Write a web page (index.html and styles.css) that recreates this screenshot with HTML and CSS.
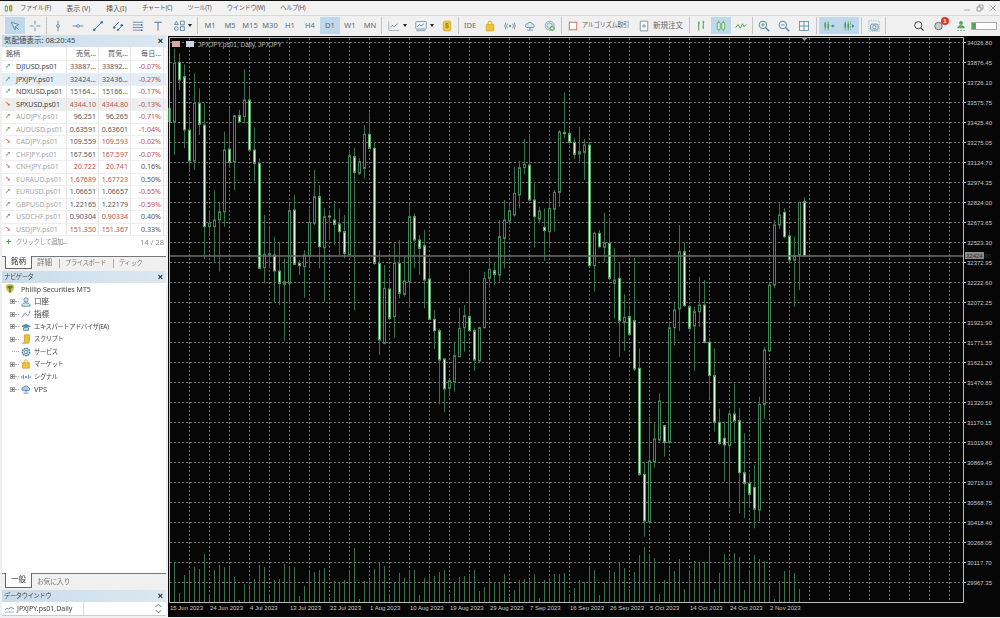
FILE: index.html
```html
<!DOCTYPE html>
<html lang="ja">
<head>
<meta charset="utf-8">
<title>MetaTrader 5</title>
<link rel="stylesheet" href="styles.css">
</head>
<body>
<div class="app">
  <header class="menubar">
    <svg class="logo" viewBox="0 0 12 12"><path d="M3 1v10M9 1v10" stroke="#4f9a54"/><rect x="1.5" y="3" width="3" height="6" fill="#e7f3e0" stroke="#4f9a54"/><rect x="7.500" y="2.500" width="3" height="6" fill="#e0b93c" stroke="#4f9a54"/></svg>
    <nav class="menus">
      <span class="k">ファイル (F)</span><span>表示 (V)</span><span>挿入(I)</span><span class="k">チャート(C)</span><span class="k">ツール(T)</span><span class="k">ウインドウ(W)</span><span class="k">ヘルプ(H)</span>
    </nav>
    <div class="winctl">
      <svg viewBox="0 0 8 8"><path d="M1 6h6" stroke="#aaa"/></svg>
      <svg viewBox="0 0 8 8"><path d="M1 3h4v4H1zM3 3V1h4v4H5" fill="none" stroke="#999"/></svg>
      <svg viewBox="0 0 8 8"><path d="M1.500 1.500l5 5M6.500 1.500l-5 5" stroke="#999"/></svg>
    </div>
  </header>

  <div class="toolbar">
    <button class="tb on"><svg class="ic" viewBox="0 0 16 16"><path d="M3 3l10 3-4 2-1 5z" fill="#d8e8f2" stroke="#3f7396"/><path d="M9 9l4 4" stroke="#3f7396"/></svg></button>
    <button class="tb"><svg class="ic" viewBox="0 0 16 16"><path d="M8 1v5M8 10v5M1 8h5M10 8h5" stroke="#3f7396"/></svg></button>
    <i class="sep"></i>
    <button class="tb"><svg class="ic" viewBox="0 0 16 16"><path d="M8 1v14" stroke="#3f7396"/><circle cx="8" cy="8" r="1.800" fill="#fff" stroke="#3f7396"/></svg></button>
    <button class="tb"><svg class="ic" viewBox="0 0 16 16"><path d="M1 8h14" stroke="#3f7396"/><circle cx="8" cy="8" r="1.800" fill="#fff" stroke="#3f7396"/></svg></button>
    <button class="tb"><svg class="ic" viewBox="0 0 16 16"><path d="M3 13L13 3" stroke="#3f7396" stroke-width="1.200"/><circle cx="3" cy="13" r="1.700" fill="#3f7396"/><circle cx="13" cy="3" r="1.700" fill="#3f7396"/></svg></button>
    <button class="tb"><svg class="ic" viewBox="0 0 16 16"><path d="M2 10L9 3M7 14l7-7" stroke="#3f7396" stroke-width="1.300"/><circle cx="3" cy="10" r="1.600" fill="#3f7396"/><circle cx="13" cy="7" r="1.600" fill="#3f7396"/><circle cx="8" cy="13" r="1.400" fill="#3f7396"/></svg></button>
    <button class="tb"><svg class="ic" viewBox="0 0 16 16"><path d="M1 3h14M1 6.500h11M1 10h14M1 13.500h11" stroke="#3f7396"/><circle cx="13" cy="6.500" r="1.200" fill="#3f7396"/><circle cx="13" cy="13.500" r="1.200" fill="#3f7396"/></svg></button>
    <button class="tb"><svg class="ic" viewBox="0 0 16 16"><path d="M3 3h10M8 3v11" stroke="#3f7396" stroke-width="1.200"/></svg></button>
    <button class="tb wide"><svg class="ic" viewBox="0 0 16 16"><circle cx="4.500" cy="11.500" r="2.500" fill="none" stroke="#3f7396"/><rect x="10" y="9" width="5" height="5" fill="none" stroke="#3f7396"/><path d="M4.500 1.500L7 6H2zM10 1.500h5v5h-5z" fill="none" stroke="#3f7396"/></svg><b class="caret"></b></button>
    <i class="sep m"></i>
    <button class="tb txt">M1</button><button class="tb txt">M5</button><button class="tb txt">M15</button><button class="tb txt">M30</button><button class="tb txt">H1</button><button class="tb txt">H4</button><button class="tb txt on">D1</button><button class="tb txt">W1</button><button class="tb txt">MN</button>
    <i class="sep"></i>
    <button class="tb wide"><svg class="ic" viewBox="0 0 16 16"><path d="M1 2v12h14" stroke="#9aa" fill="none"/><path d="M3 10l3-3 2 2 5-4" stroke="#3f7396" fill="none"/></svg><b class="caret"></b></button>
    <button class="tb wide"><svg class="ic" viewBox="0 0 16 16"><rect x="1" y="2" width="14" height="10" rx="1" fill="#eef3f6" stroke="#6b8799"/><path d="M3 9l3-3 2 2 4-3" stroke="#3f7396" fill="none"/><path d="M2 14h12" stroke="#8fb3c9" stroke-width="2"/></svg><b class="caret"></b></button>
    <button class="tb"><svg class="ic" viewBox="0 0 16 16"><rect x="3" y="1.500" width="10" height="13" rx="2" fill="#f0c63c" stroke="#d6a32a"/><text x="8" y="11" class="coin">$</text></svg></button>
    <i class="sep"></i>
    <button class="tb txt">IDE</button>
    <button class="tb"><svg class="ic" viewBox="0 0 16 16"><path d="M3 6h10v8.500H3z" fill="#f2c232" stroke="#d9a520"/><path d="M5.500 6V4a2.500 2.500 0 015 0v2" fill="none" stroke="#d9a520" stroke-width="1.300"/></svg></button>
    <button class="tb"><svg class="ic" viewBox="0 0 16 16"><circle cx="8" cy="8" r="1.500" fill="#5b7f97"/><path d="M4.500 5a5 5 0 000 6M11.500 5a5 5 0 010 6M2.500 3.500a8 8 0 000 9M13.500 3.500a8 8 0 010 9" fill="none" stroke="#5b7f97"/></svg></button>
    <button class="tb"><svg class="ic" viewBox="0 0 16 16"><path d="M4 10a2.500 2.500 0 01.500-5 4 4 0 017 .5A2.300 2.300 0 0112 10z" fill="#d5e6f1" stroke="#4f7f9f"/><path d="M8 10v3M4 13.500h8" stroke="#4f7f9f"/></svg></button>
    <button class="tb"><svg class="ic" viewBox="0 0 16 16"><circle cx="7.500" cy="7.500" r="6" fill="#dbe6ea" stroke="#7d9aa8"/><circle cx="7.500" cy="7.500" r="3.500" fill="none" stroke="#7d9aa8"/><circle cx="11" cy="11" r="3.500" fill="#69b56d"/><path d="M11 9v4M9 11h4" stroke="#fff"/></svg></button>
    <i class="sep"></i>
    <button class="tb label"><svg class="ic" viewBox="0 0 16 16"><rect x="3" y="3" width="10" height="10" fill="#fff" stroke="#c9736a" stroke-width="1.300"/></svg><span class="k">アルゴリズム取引</span></button>
    <button class="tb label order"><svg class="ic" viewBox="0 0 16 16"><path d="M3 1.500h10v13H3z" fill="#fff" stroke="#5a7d92"/><path d="M8 5v6M5 8h6" stroke="#5a7d92"/></svg><span>新規注文</span></button>
    <i class="sep"></i>
    <button class="tb"><svg class="ic" viewBox="0 0 16 16"><path d="M5 2v12M4 8h1M5 4h1.500M11 1v11M10 9h1M11 3h1.500" stroke="#46a04d" stroke-width="1.300" fill="none"/></svg></button>
    <button class="tb on"><svg class="ic" viewBox="0 0 16 16"><path d="M5 1v14M11 1v14" stroke="#46a04d"/><rect x="3" y="3.500" width="4" height="9" rx="1" fill="#dff0dc" stroke="#46a04d"/><rect x="9" y="3.500" width="4" height="9" rx="1" fill="#dff0dc" stroke="#46a04d"/></svg></button>
    <button class="tb"><svg class="ic" viewBox="0 0 16 16"><path d="M1 10l3-4 3 5 3-6 2 4 3-3" fill="none" stroke="#46a04d" stroke-width="1.300"/></svg></button>
    <i class="sep"></i>
    <button class="tb"><svg class="ic" viewBox="0 0 16 16"><circle cx="6.500" cy="6.500" r="5" fill="#eef4f8" stroke="#4f7f9f" stroke-width="1.200"/><path d="M10 10l5 5" stroke="#4f7f9f" stroke-width="1.600"/><path d="M6.500 4v5M4 6.500h5" stroke="#4f9a54"/></svg></button>
    <button class="tb"><svg class="ic" viewBox="0 0 16 16"><circle cx="6.500" cy="6.500" r="5" fill="#eef4f8" stroke="#4f7f9f" stroke-width="1.200"/><path d="M10 10l5 5" stroke="#4f7f9f" stroke-width="1.600"/><path d="M4 6.500h5" stroke="#4f7f9f"/></svg></button>
    <button class="tb"><svg class="ic" viewBox="0 0 16 16"><rect x="2" y="2" width="12" height="12" fill="#eef4f8" stroke="#4f7f9f"/><path d="M8 2v12M2 8h12" stroke="#4f7f9f"/></svg></button>
    <i class="sep m"></i>
    <button class="tb on"><svg class="ic" viewBox="0 0 16 16"><path d="M3 2v12M7 2v12" stroke="#46a04d"/><rect x="2" y="4" width="2" height="6" fill="#46a04d"/><rect x="6" y="5" width="2" height="6" fill="#46a04d"/><path d="M10 8h5" stroke="#3f7396"/><path d="M15 8l-2.500-2v4z" fill="#3f7396"/></svg></button>
    <button class="tb on"><svg class="ic" viewBox="0 0 16 16"><path d="M3 2v12M7 2v12" stroke="#46a04d"/><rect x="2" y="4" width="2" height="6" fill="#46a04d"/><rect x="6" y="5" width="2" height="6" fill="#46a04d"/><path d="M10 2v12" stroke="#3f7396" stroke-dasharray="1 1"/><path d="M15 8l-3-2.500v5z" fill="#3f7396"/></svg></button>
    <i class="sep m"></i>
    <button class="tb"><svg class="ic" viewBox="0 0 16 16"><path d="M1 1h14v14H1z" fill="none" stroke="#8aa" stroke-dasharray="1.500 1.500"/><rect x="3.500" y="5.500" width="10" height="8" rx="1.500" fill="#dbe6ee" stroke="#4f7f9f"/><circle cx="8.500" cy="9.500" r="2.200" fill="#fff" stroke="#4f7f9f"/></svg></button>
    <i class="sep"></i>
    <div class="status">
      <svg class="ic" viewBox="0 0 16 16"><circle cx="7" cy="7" r="4.800" fill="none" stroke="#444" stroke-width="1.300"/><path d="M10.500 10.500l3.500 3.500" stroke="#444" stroke-width="1.500"/></svg>
      <span class="bell"><svg class="ic" viewBox="0 0 16 16"><circle cx="6" cy="8" r="5" fill="#ccc" stroke="#666" stroke-width="1.200"/></svg><b class="badge">1</b></span>
      <svg class="ic" viewBox="0 0 16 16"><circle cx="8" cy="4" r="2.600" fill="#5aa65e"/><path d="M3 11c0-3 2-4 5-4s5 1 5 4z" fill="#5aa65e"/><path d="M3 14h2M7 14h2M11 14h2" stroke="#5aa65e" stroke-width="1.400"/></svg>
      <span class="meter"><i class="fill"></i></span>
    </div>
  </div>

  <main class="workspace">
    <aside class="side">
      <section class="watch">
        <h2 class="title"><span>気配値表示: 08:20:45</span><b class="close">×</b></h2>
        <div class="row head"><span>銘柄</span><span class="c">売気...</span><span class="c">買気...</span><span class="c">毎日...</span></div>
        <div class="row"><span class="sym"><b class="up">➚</b>DJIUSD.ps01</span><span>33887...</span><span>33892...</span><span class="red">-0.07%</span></div>
        <div class="row sel"><span class="sym"><b class="up">➚</b>JPXJPY.ps01</span><span>32424...</span><span>32436...</span><span class="red">-0.27%</span></div>
        <div class="row"><span class="sym"><b class="up">➚</b>NDXUSD.ps01</span><span>15164...</span><span>15166...</span><span class="red">-0.17%</span></div>
        <div class="row grey"><span class="sym"><b class="down">➘</b>SPXUSD.ps01</span><span class="red">4344.10</span><span class="red">4344.80</span><span class="red">-0.13%</span></div>
        <div class="row dim"><span class="sym"><b class="up">➚</b>AUDJPY.ps01</span><span>96.251</span><span>96.265</span><span class="red">-0.71%</span></div>
        <div class="row dim"><span class="sym"><b class="up">➚</b>AUDUSD.ps01</span><span>0.63591</span><span>0.63601</span><span class="red">-1.04%</span></div>
        <div class="row dim"><span class="sym"><b class="down">➘</b>CADJPY.ps01</span><span>109.559</span><span class="red">109.593</span><span class="red">-0.02%</span></div>
        <div class="row dim"><span class="sym"><b class="up">➚</b>CHFJPY.ps01</span><span>167.561</span><span class="red">167.597</span><span class="red">-0.07%</span></div>
        <div class="row dim"><span class="sym"><b class="down">➘</b>CNHJPY.ps01</span><span class="red">20.722</span><span class="red">20.741</span><span>0.16%</span></div>
        <div class="row dim"><span class="sym"><b class="down">➘</b>EURAUD.ps01</span><span class="red">1.67689</span><span class="red">1.67723</span><span>0.50%</span></div>
        <div class="row dim"><span class="sym"><b class="up">➚</b>EURUSD.ps01</span><span>1.06651</span><span>1.06657</span><span class="red">-0.55%</span></div>
        <div class="row dim"><span class="sym"><b class="up">➚</b>GBPUSD.ps01</span><span>1.22165</span><span>1.22179</span><span class="red">-0.59%</span></div>
        <div class="row dim"><span class="sym"><b class="up">➚</b>USDCHF.ps01</span><span class="blue">0.90304</span><span class="red">0.90334</span><span>0.40%</span></div>
        <div class="row dim"><span class="sym"><b class="down">➘</b>USDJPY.ps01</span><span class="red">151.350</span><span class="red">151.367</span><span>0.33%</span></div>
        <div class="add"><span class="addlabel"><b class="plus">+</b><span class="k">クリックして追加...</span></span><span>14 / 28</span></div>
        <div class="tabs"><span class="tab active">銘柄</span><span class="tab">詳細</span><span class="tab bar k">プライスボード</span><span class="tab bar k">ティック</span></div>
      </section>

      <section class="navigator">
        <h2 class="title"><span class="k">ナビゲータ</span><b class="close">×</b></h2>
        <ul class="tree">
          <li class="root"><svg class="ni" viewBox="0 0 12 12"><path d="M1 3a5 3 0 0110 0c0 4-3 8-5 8S1 7 1 3z" fill="#e6b93c"/><path d="M3 2h6v3H7v5H5V5H3z" fill="#2f8f5b"/></svg>Phillip Securities MT5</li>
          <li><i class="exp"></i><svg class="ni" viewBox="0 0 12 12"><circle cx="6" cy="3.500" r="2.500" fill="#dbe9f3" stroke="#4f7f9f"/><path d="M1 11c0-3 2-4 5-4s5 1 5 4z" fill="#dbe9f3" stroke="#4f7f9f"/></svg>口座</li>
          <li><i class="exp"></i><svg class="ni" viewBox="0 0 12 12"><path d="M1 10c2 0 2-5 4-5s1 3 3 3 2-5 3-6" fill="none" stroke="#6a7f8c"/></svg>指標</li>
          <li><i class="exp"></i><svg class="ni" viewBox="0 0 12 12"><path d="M0 5l6-3 6 3-6 3z" fill="#4f8fb5"/><path d="M3 7v3h6V7" fill="#bcd6e6" stroke="#4f7f9f"/></svg><span class="k">エキスパートアドバイザ(EA)</span></li>
          <li><i class="exp"></i><svg class="ni" viewBox="0 0 12 12"><path d="M4 1h6v8a2 2 0 01-2 2H2c1 0 2-1 2-2z" fill="#f0c040" stroke="#c99a20"/></svg><span class="k">スクリプト</span></li>
          <li><i class="exp none"></i><svg class="ni" viewBox="0 0 12 12"><circle cx="6" cy="6" r="4.500" fill="#bcd6e6" stroke="#4f7f9f" stroke-width="1.600" stroke-dasharray="2 1"/><circle cx="6" cy="6" r="1.800" fill="#fff" stroke="#4f7f9f"/></svg><span class="k">サービス</span></li>
          <li><i class="exp"></i><svg class="ni" viewBox="0 0 12 12"><path d="M2 4.500h8V11H2z" fill="#f2c232" stroke="#d9a520"/><path d="M4 4.500V3a2 2 0 014 0v1.500" fill="none" stroke="#d9a520"/></svg><span class="k">マーケット</span></li>
          <li><i class="exp"></i><svg class="ni" viewBox="0 0 12 12"><circle cx="6" cy="6" r="1.200" fill="#5b7f97"/><path d="M3 3.500v5M9 3.500v5M1 4.500v3M11 4.500v3" stroke="#5b7f97"/></svg><span class="k">シグナル</span></li>
          <li><i class="exp"></i><svg class="ni" viewBox="0 0 12 12"><path d="M3 8a2 2 0 010-4 3.500 3.500 0 016 .3A1.900 1.900 0 019 8z" fill="#a9cee6" stroke="#4f7f9f"/><path d="M6 8v2M3 11h6" stroke="#4f7f9f"/></svg>VPS</li>
        </ul>
        <div class="tabs"><span class="tab active">一般</span><span class="tab fav">お気に入り</span></div>
      </section>

      <section class="datawin">
        <h2 class="title"><span class="k">データウインドウ</span><b class="close">×</b></h2>
        <div class="datarow">
          <span class="dataname"><svg class="dl" viewBox="0 0 10 8"><path d="M0 5l2-2 2 1 3-2 3 2" fill="none" stroke="#4f7f9f"/><path d="M0 7.500h10" stroke="#9ab"/></svg>JPXJPY.ps01,Daily</span>
          <span class="spin"><svg viewBox="0 0 8 12"><path d="M1 4l3-3 3 3M1 8l3 3 3-3" fill="none" stroke="#555"/></svg></span>
        </div>
      </section>
    </aside>

    <section class="chart" id="chart" aria-label="JPXJPY.ps01, Daily"></section>
  </main>
</div>
<script src="chart.js"></script>
</body>
</html>
```

FILE: styles.css
```css
* { box-sizing: border-box; }
html, body { margin: 0; width: 1000px; height: 618px; overflow: hidden; background: #f0f0f0; }
body { font: 7.500px/1 "Noto Sans", "Noto Sans CJK JP", sans-serif; color: #555; }
.app { display: flex; flex-direction: column; height: 618px; filter: blur(.35px); }

/* Narrow kana, as the reference's Japanese UI face draws them */
.k { font-size: 6.300px; letter-spacing: -.4px; }

.menubar { display: flex; align-items: center; height: 15px; border-top: 1px solid #111; background: #f2f2f2; flex: none; padding-left: 4px; }
.logo { width: 9px; height: 9px; margin-right: 7px; }
.menus { display: flex; gap: 15.500px; white-space: nowrap; font-size: 7px; }
.winctl { margin-left: auto; display: flex; gap: 5px; padding-right: 3px; }
.winctl svg { width: 8px; height: 8px; }

.toolbar { display: flex; align-items: center; height: 20px; padding: 1px 0 1px 5px; background: #f0f0f0; border-top: 1px solid #d8d8d8; flex: none; }
.tb { display: flex; align-items: center; justify-content: center; width: 20px; height: 17px; padding: 0; border: 0; background: none; font: inherit; color: #5d6a73; flex: none; }
.tb.on { background: #bfd9ea; }
.tb.wide { width: 27px; gap: 3px; justify-content: flex-start; padding-left: 5px; }
.tb.txt { font-size: 7.500px; }
.tb.label { width: 74px; justify-content: flex-start; gap: 3px; padding: 0 0 0 4px; color: #666; white-space: nowrap; }
.tb.order { width: 51px; padding-left: 1px; }
.ic { width: 12px; height: 12px; flex: none; }
.caret { width: 0; height: 0; border: 2.500px solid transparent; border-top: 3px solid #222; border-bottom: 0; }
.coin { font: 700 9px "Liberation Sans", sans-serif; text-anchor: middle; fill: #a87f12; }
.sep { width: 1px; height: 17px; margin: 0 1px; background: #c4c4c4; flex: none; }
.sep.m { margin: 0 2px; }

.status { margin-left: auto; display: flex; align-items: center; gap: 9px; padding-right: 3px; }
.bell { position: relative; display: flex; }
.badge { position: absolute; top: -3px; right: -3px; width: 8px; height: 8px; border-radius: 50%; background: #d8392b; color: #fff; font: 700 6px/8px "Liberation Sans", sans-serif; text-align: center; }
.meter { display: block; width: 26px; height: 8px; border: 1px solid #aaa; background: #fff; margin-left: -5px; }
.fill { display: block; width: 4px; height: 100%; background: #5aa65e; }

.workspace { display: flex; flex: 1; min-height: 0; gap: 2px; padding-bottom: 2px; }
.side { display: flex; flex-direction: column; width: 166px; flex: none; padding-left: 2px; }
.title { display: flex; justify-content: space-between; align-items: center; height: 12px; margin: 0; padding: 0 3px 0 2px; font: 400 7.500px/1 "Noto Sans", "Noto Sans CJK JP", sans-serif; color: #444; background: linear-gradient(90deg, #c9dcea, #dce8f1); flex: none; }
.close { color: #222; font: 700 9px/1 "Liberation Sans", sans-serif; }

.watch { height: 234px; flex: none; display: flex; flex-direction: column; background: #fff; }
.row { display: grid; grid-template-columns: 65px 32px 32px 33px; height: 12.500px; align-items: center; border-bottom: 1px solid #eee; flex: none; white-space: nowrap; font-size: 7.100px; }
.row > span { display: flex; align-items: center; justify-content: flex-end; height: 100%; padding-right: 2px; border-right: 1px solid #e4e4e4; overflow: hidden; }
.row > .sym { justify-content: flex-start; padding: 0 0 0 3px; color: #444; }
.row.head { height: 14px; color: #555; }
.row.head > span { justify-content: flex-start; padding-left: 4px; }
.row.head > .c { justify-content: flex-end; }
.row.sel { background: #e2eef7; }
.row.grey { background: #eeeeee; }
.row.dim > .sym { color: #a6a6a6; }
.red { color: #b9544e; }
.blue { color: #3f5a78; }
.up, .down { width: 11px; font: 400 7px/1 "DejaVu Sans", sans-serif; flex: none; }
.up { color: #3f9a5c; }
.down { color: #c9504a; }
.add { display: flex; justify-content: space-between; align-items: center; height: 13px; padding: 0 2px 0 4px; flex: none; color: #888; }
.addlabel { display: flex; align-items: center; }
.plus { width: 10px; color: #4f9a54; font: 700 9px/1 "Liberation Sans", sans-serif; }

.tabs { display: flex; height: 15px; flex: none; background: #f0f0f0; border-top: 1px solid #777; padding-left: 3px; color: #777; }
.tab { display: flex; align-items: center; padding: 0 5px; height: 100%; white-space: nowrap; }
.tab.active { width: 27px; justify-content: center; background: #fff; color: #333; border-left: 1px solid #666; border-right: 1px solid #666; border-bottom: 1px solid #666; margin-top: -1px; height: calc(100% + 1px); }
.tab.bar { border-left: 1px solid #aaa; height: 9px; align-self: center; margin-left: 2px; }
.tab.fav { font-size: 7px; letter-spacing: -.4px; }

.watch .tabs { margin-top: 7px; height: 13px; }
.navigator { flex: 1; min-height: 0; display: flex; flex-direction: column; background: #fff; margin-top: 2px; }
.tree { list-style: none; margin: 0; padding: 0 0 0 3px; color: #444; flex: 1; }
.tree li { display: flex; align-items: center; height: 12.500px; white-space: nowrap; }
.tree .root { font-size: 7px; }
.ni { width: 10px; height: 10px; margin-right: 3px; flex: none; }
.root .ni { margin-right: 6px; }
.exp { position: relative; width: 5px; height: 5px; margin: 0 6px 0 5px; border: 1px solid #aaa; flex: none; background: linear-gradient(#777, #777) center / 3px 1px no-repeat, linear-gradient(#777, #777) center / 1px 3px no-repeat; }
.exp::after { content: ""; position: absolute; left: 4px; top: 1px; width: 4px; border-top: 1px dotted #aaa; }
.exp.none { border-color: transparent; background: none; }
.exp.none::after { left: 1px; width: 7px; }

.datawin { flex: none; margin-top: 2px; background: #f0f0f0; }
.datarow { display: flex; align-items: center; justify-content: space-between; height: 14px; background: #fff; border-bottom: 1px solid #ccc; font-size: 7px; }
.dataname { display: flex; align-items: center; gap: 3px; height: 100%; width: 82px; padding-left: 3px; border-right: 1px solid #ddd; color: #444; white-space: nowrap; }
.dl { width: 9px; height: 8px; flex: none; }
.spin { display: flex; padding-right: 4px; }
.spin svg { width: 7px; height: 11px; }

.chart { flex: 1; min-width: 0; margin-top: 1px; background: #000; }
.plot { display: block; width: 832px; height: 581px; background: #060606; }
.frame { fill: none; stroke: #bdbdbd; }
.grid { stroke: #6c6c6c; stroke-dasharray: 2 2; stroke-width: 1; }
.wick { stroke: #33724a; stroke-width: 1; }
.bull { fill: #060606; stroke: #44855a; stroke-width: 1; }
.bear { fill: #dff6da; stroke: #5aa468; stroke-width: 1; }
.vol { stroke: #37724a; stroke-width: 1; }
.ask { stroke: #6e6e6e; stroke-width: 1.500; }
.tick { stroke: #bdbdbd; }
.axis { font: 6px "Liberation Sans", sans-serif; fill: #c8c8c8; }
.asktag { fill: #8a8a8a; }
.asktext { font: 6px "Liberation Sans", sans-serif; fill: #333; }
.ctitle { font: 6.500px "Liberation Sans", sans-serif; fill: #b9b9b9; }
.mark { fill: #999; }
.flag1 { fill: #d7a6a0; }
.flag2 { fill: #c9d8e4; }
```

FILE: chart.js
```js
// Candles measured on a 3x crop: [high, bodyTop, bodyBottom, low, filled]
var candles = [
[180,220,260,300,0],[40,85,262,360,0],[55,82,135,165,1],[88,125,285,340,1],[245,285,378,405,1],[115,205,378,405,0],[160,205,268,300,1],[205,270,575,672,1],
[525,565,575,600,0],[465,555,575,680,0],[500,530,555,710,0],[290,345,530,575,0],[220,342,382,395,1],[240,242,380,465,0],[225,242,260,265,1],[103,195,245,265,0],
[155,195,345,348,1],[278,345,385,440,1],[370,385,700,702,1],[540,658,698,745,0],[575,656,660,700,0],[605,660,708,805,1],[620,708,745,810,1],[670,740,748,918,0],
[505,527,745,802,0],[480,525,688,690,1],[675,685,692,720,1],[645,660,695,788,0],[520,562,662,695,0],[405,485,565,570,0],[450,485,635,700,1],[520,545,638,800,0],
[525,543,546,615,1],[498,555,568,630,1],[520,567,590,660,1],[540,590,655,670,1],[345,362,660,662,0],[338,365,412,825,1],[370,380,415,420,0],[270,298,400,430,0],
[232,298,340,342,1],[320,340,685,690,1],[645,685,915,960,1],[690,760,925,928,0],[730,762,850,852,1],[625,685,845,908,0],[615,685,775,790,1],[665,738,778,785,0],
[505,545,740,820,0],[535,545,615,700,1],[600,615,640,720,1],[585,632,735,820,1],[670,732,853,855,1],[825,853,887,942,1],[880,887,975,1108,1],[970,972,1062,1132,1],
[1040,1037,1060,1080,0],[920,962,1040,1070,0],[818,880,965,965,0],[810,842,878,950,0],[705,845,887,890,1],[880,887,975,1008,1],[875,878,978,980,0],[710,730,878,880,0],
[670,703,730,760,0],[680,707,718,750,1],[555,605,720,740,0],
[495,555,610,700,0],[505,527,558,570,0],[395,475,540,545,0],[378,398,480,520,0],[312,388,398,418,0],[297,390,495,497,1],[445,495,545,638,1],[515,528,553,565,0],
[520,577,587,678,1],[490,520,590,640,0],[465,472,523,590,0],[285,290,472,515,0],[172,292,296,310,1],[280,296,322,330,1],[310,322,358,372,1],[275,350,357,380,0],
[312,330,352,435,0],[325,330,692,695,1],[590,595,692,770,0],[585,595,635,640,1],[533,623,637,680,0],[548,625,730,735,1],[640,735,745,850,0],[682,730,858,965,1],
[778,847,862,948,0],[820,845,898,900,1],[668,857,1002,1008,1],[940,1000,1318,1322,1],[1280,1318,1458,1505,1],[1145,1278,1460,1465,0],[1165,1212,1280,1298,0],
[1075,1098,1215,1220,0],[1170,1172,1222,1265,1],[860,878,1222,1225,0],[800,825,878,930,0],[570,650,822,888,0],[622,650,812,815,1],[810,815,880,885,1],[815,830,873,1008,0],
[725,810,830,875,0],[735,810,922,925,1],[910,922,1022,1090,1],[940,1022,1162,1190,1],[1120,1162,1225,1230,1],[1160,1210,1230,1340,1],[1125,1137,1232,1420,0],
[1045,1137,1158,1220,1],[1118,1157,1313,1435,1],[1195,1313,1345,1450,1],[1315,1345,1378,1420,1],[1290,1357,1422,1480,1],[1085,1108,1425,1458,0],[935,945,1108,1153,0],
[745,750,948,950,0],[555,570,750,760,0],[505,540,570,582,0],[520,532,605,610,1],[585,603,675,680,1],[605,662,675,815,0],[500,502,660,765,0],[487,500,662,665,1]
];
var volumes = [40,9,27,32,35,33,48,8,32,37,35,35,25,2,18,17,23,37,35,8,22,23,38,36,35,6,16,32,30,32,34,5,21,20,22,32,54,3,21,23,33,40,36,8,20,29,24,32,32,7,24,27,26,30,32,7,19,25,26,28,32,11,15,23,20,20,28,5,12,22,23,23,28,4,22,24,28,28,29,7,14,22,20,36,32,7,20,32,30,40,34,13,30,47,55,48,44,8,22,36,31,43,13,32,41,39,40,55,13,29,48,37,49,45,12,32,47,43,41,17,3,21,31,32,29,13];
var prices = ["34026.80","33876.45","33726.10","33575.75","33425.40","33275.05","33124.70","32974.35","32824.00","32673.65","32523.30","32372.95","32222.60","32072.25","31921.90","31771.55","31621.20","31470.85","31320.50","31170.15","31019.80","30869.45","30719.10","30568.75","30418.40","30268.05","30117.70","29967.35"];
var dates = ["15 Jun 2023","24 Jun 2023","4 Jul 2023","13 Jul 2023","22 Jul 2023","1 Aug 2023","10 Aug 2023","19 Aug 2023","29 Aug 2023","7 Sep 2023","16 Sep 2023","26 Sep 2023","5 Oct 2023","14 Oct 2023","24 Oct 2023","2 Nov 2023"];

var LEFT = 170, RIGHT = 963, TOP = 38, BOTTOM = 602;
var s = '<svg class="plot" viewBox="168 36 832 581">';

// grid
for (var gx = 189; gx < RIGHT; gx += 20) s += '<line class="grid" x1="' + (gx + .5) + '" x2="' + (gx + .5) + '" y1="' + TOP + '" y2="' + BOTTOM + '"/>';
prices.forEach(function (p, i) {
  var y = 42 + i * 20;
  s += '<line class="grid" x1="' + LEFT + '" x2="' + RIGHT + '" y1="' + (y + .5) + '" y2="' + (y + .5) + '"/>';
  s += '<line class="tick" x1="' + RIGHT + '" x2="' + (RIGHT + 3) + '" y1="' + (y + .5) + '" y2="' + (y + .5) + '"/>';
  s += '<text class="axis" x="' + (RIGHT + 4) + '" y="' + (y + 2.500) + '">' + p + '</text>';
});

// volumes
volumes.forEach(function (v, i) {
  var x = 174.5 + i * 5;
  s += '<line class="vol" x1="' + x + '" x2="' + x + '" y1="' + (BOTTOM - v) + '" y2="' + BOTTOM + '"/>';
});

// candles
function py(z) { return 35 + z / 3; }
candles.forEach(function (c, i) {
  var x = 169 + i * 5;
  var top = py(c[1]), bot = py(c[2]);
  s += '<line class="wick" x1="' + (x + .5) + '" x2="' + (x + .5) + '" y1="' + py(c[0]) + '" y2="' + py(c[3]) + '"/>';
  s += '<rect class="' + (c[4] ? 'bear' : 'bull') + '" x="' + (x - .5) + '" y="' + top + '" width="2" height="' + Math.max(bot - top, 1) + '"/>';
});

// current price line, frame, axes
s += '<line class="ask" x1="' + LEFT + '" x2="' + RIGHT + '" y1="256" y2="256"/>';
s += '<rect class="asktag" x="965" y="252" width="19" height="7"/><text class="asktext" x="966" y="258">32424.00</text>';
s += '<path class="frame" d="M' + (LEFT - .5) + ' 37.500H' + (RIGHT + .5) + 'V' + (BOTTOM + .5) + 'H' + (LEFT - .5) + 'z"/>';
s += '<path class="mark" d="M801 37h7l-3.500 4z"/>';
dates.forEach(function (d, i) {
  s += '<text class="axis" x="' + (170 + i * 40) + '" y="610">' + d + '</text>';
});

// title
s += '<rect class="flag1" x="172" y="41" width="8" height="6"/><rect class="flag2" x="186" y="41" width="8" height="6"/>';
s += '<text class="ctitle" x="198" y="47">JPXJPY.ps01, Daily, JPXJPY</text>';
s += '</svg>';
document.getElementById('chart').innerHTML = s;
```
